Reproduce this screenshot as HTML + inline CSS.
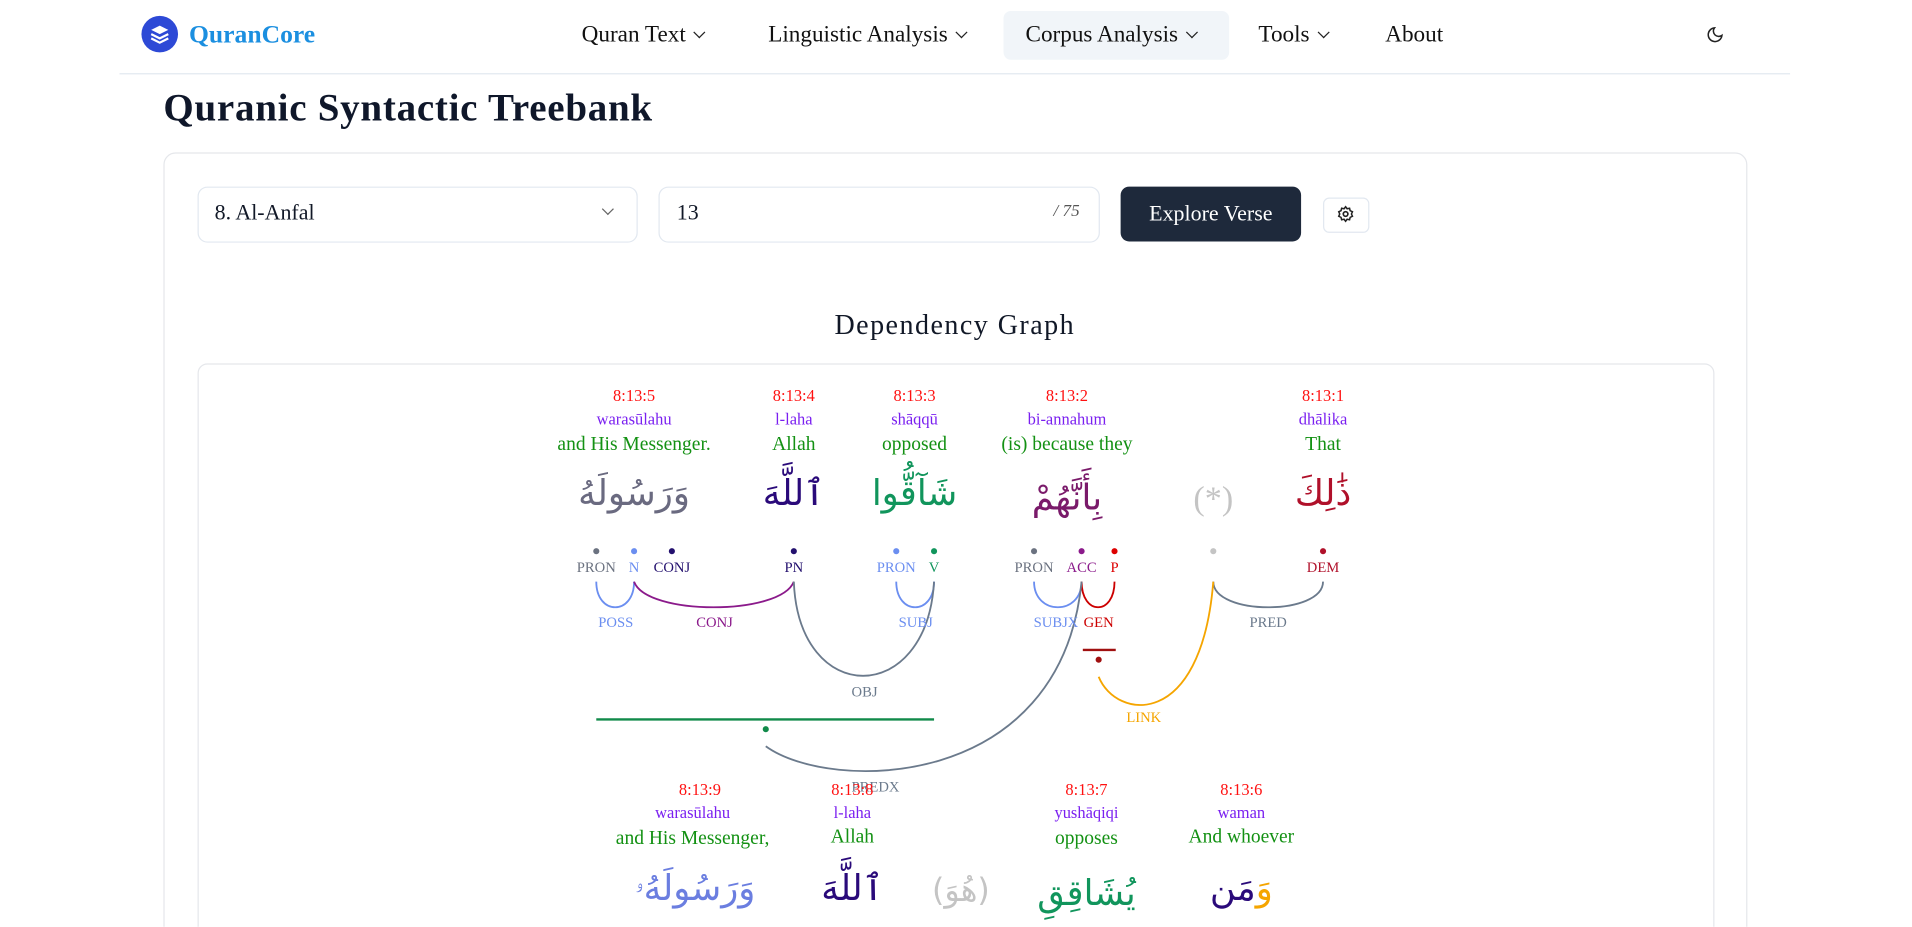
<!DOCTYPE html>
<html><head><meta charset="utf-8"><style>
html,body{margin:0;padding:0;background:#fff;overflow:hidden}
body{width:1912px;height:927px;position:relative}
#w{position:absolute;left:0;top:0;width:1568px;height:760px;transform:scale(1.219388);transform-origin:0 0;font-family:"Liberation Serif",serif;color:#111827;overflow:hidden}
.a{position:absolute;white-space:nowrap}
.c{position:absolute;white-space:nowrap;transform:translateX(-50%);text-align:center}
.nav{font-size:19px;top:18px;color:#111}
.chev{display:inline-block;width:6px;height:6px;border-right:1.5px solid #222;border-bottom:1.5px solid #222;transform:rotate(45deg);margin-left:8px;position:relative;top:-4px}
.ref{color:#f11;font-size:13.5px}
.tr{color:#7a1ff0;font-size:13.5px}
.en{color:#139113;font-size:16px}
.ar{font-family:"DejaVu Sans",sans-serif;font-size:29px;direction:rtl;line-height:1}
</style></head><body><div id="w">
<div class="a" style="left:116px;top:13px;width:30px;height:30px;border-radius:50%;background:#2d49d6"></div>
<svg class="a" style="left:116px;top:13px" width="30" height="30" viewBox="0 0 30 30"><path d="M15 8l7 3.5-7 3.5-7-3.5z" fill="#fff"/><path d="M8 15l7 3.5 7-3.5M8 18.5l7 3.5 7-3.5" fill="none" stroke="#fff" stroke-width="1.8"/></svg>
<div class="a" style="left:155px;top:16px;font-size:21px;font-weight:bold;color:#1b8fe0">QuranCore</div>
<div class="a" style="left:823px;top:9px;width:185px;height:40px;background:#f1f5f9;border-radius:6px"></div>
<div class="a nav" style="left:477px">Quran Text<span class="chev"></span></div>
<div class="a nav" style="left:630px">Linguistic Analysis<span class="chev"></span></div>
<div class="a nav" style="left:841px">Corpus Analysis<span class="chev"></span></div>
<div class="a nav" style="left:1032px">Tools<span class="chev"></span></div>
<div class="a nav" style="left:1136px">About</div>
<svg class="a" style="left:1399px;top:21px" width="15" height="15" viewBox="0 0 24 24"><path d="M21 12.8A9 9 0 1 1 11.2 3a7 7 0 0 0 9.8 9.8z" fill="none" stroke="#222" stroke-width="2"/></svg>
<div class="a" style="left:98px;top:60px;width:1370px;height:1px;background:#e2e8f0"></div>
<div class="a" style="left:134px;top:70px;font-size:32px;font-weight:bold;color:#0f172a;letter-spacing:0.6px">Quranic Syntactic Treebank</div>
<div class="a" style="left:134px;top:125px;width:1297px;height:760px;border:1px solid #e5e7eb;border-radius:10px"></div>
<div class="a" style="left:162px;top:153px;width:359px;height:44px;border:1px solid #e2e8f0;border-radius:8px"></div>
<div class="a" style="left:176px;top:164px;font-size:18px">8. Al-Anfal</div>
<div class="a" style="left:495px;top:168px;width:6px;height:6px;border-right:1.3px solid #666;border-bottom:1.3px solid #666;transform:rotate(45deg)"></div>
<div class="a" style="left:540px;top:153px;width:360px;height:44px;border:1px solid #e2e8f0;border-radius:8px"></div>
<div class="a" style="left:555px;top:164px;font-size:18px">13</div>
<div class="a" style="left:864px;top:166px;font-size:14px;font-style:italic;color:#555">/ 75</div>
<div class="a" style="left:919px;top:153px;width:148px;height:45px;background:#1e293b;border-radius:7px;color:#fff;font-size:18px;line-height:45px;text-align:center">Explore Verse</div>
<div class="a" style="left:1085px;top:162px;width:36px;height:27px;border:1px solid #e2e8f0;border-radius:5px"></div>
<svg class="a" style="left:1096px;top:168px" width="15" height="15" viewBox="0 0 24 24"><circle cx="12" cy="12" r="3" fill="none" stroke="#222" stroke-width="2.2"/><path d="M12 2.5l2 2.6 3.2-.6.8 3.1 3 1.4-1.3 3 1.3 3-3 1.4-.8 3.1-3.2-.6-2 2.6-2-2.6-3.2.6-.8-3.1-3-1.4 1.3-3-1.3-3 3-1.4.8-3.1 3.2.6z" fill="none" stroke="#222" stroke-width="2"/></svg>
<div class="c" style="left:783px;top:254px;font-size:23px;letter-spacing:1.2px">Dependency Graph</div>
<div class="a" style="left:162px;top:298px;width:1242px;height:560px;border:1px solid #e5e7eb;border-radius:8px"></div>

<div class="c ref" style="left:520px;top:317px">8:13:5</div><div class="c tr" style="left:520px;top:336px">warasūlahu</div><div class="c en" style="left:520px;top:356px">and His Messenger.</div>
<div class="c ar" style="left:520px;top:390px;color:#6a6a80">وَرَسُولَهُ</div>
<div class="c ref" style="left:651px;top:317px">8:13:4</div><div class="c tr" style="left:651px;top:336px">l-laha</div><div class="c en" style="left:651px;top:356px">Allah</div>
<div class="c ar" style="left:651px;top:390px;color:#2a0a7a">ٱللَّهَ</div>
<div class="c ref" style="left:750px;top:317px">8:13:3</div><div class="c tr" style="left:750px;top:336px">shāqqū</div><div class="c en" style="left:750px;top:356px">opposed</div>
<div class="c ar" style="left:750px;top:390px;color:#11955c">شَآقُّوا</div>
<div class="c ref" style="left:875px;top:317px">8:13:2</div><div class="c tr" style="left:875px;top:336px">bi-annahum</div><div class="c en" style="left:875px;top:356px">(is) because they</div>
<div class="c ar" style="left:875px;top:394px;color:#7a1a6a">بِأَنَّهُمْ</div>
<div class="c" style="left:995px;top:394px;font-size:28px;color:#c4c4c4">(*)</div>
<div class="c ref" style="left:1085px;top:317px">8:13:1</div><div class="c tr" style="left:1085px;top:336px">dhālika</div><div class="c en" style="left:1085px;top:356px">That</div>
<div class="c ar" style="left:1085px;top:390px;color:#b0102a">ذَٰلِكَ</div>

<svg class="a" style="left:0;top:0" width="1568" height="760" viewBox="0 0 1568 760" font-family="Liberation Serif,serif" font-size="12" text-anchor="middle">
<g>
<circle cx="489" cy="452" r="2.5" fill="#6b7280"/><text x="489" y="469" fill="#6b7280">PRON</text>
<circle cx="520" cy="452" r="2.5" fill="#6b8ef0"/><text x="520" y="469" fill="#6b8ef0">N</text>
<circle cx="551" cy="452" r="2.5" fill="#23106e"/><text x="551" y="469" fill="#23106e">CONJ</text>
<circle cx="651" cy="452" r="2.5" fill="#23106e"/><text x="651" y="469" fill="#23106e">PN</text>
<circle cx="735" cy="452" r="2.5" fill="#6b8ef0"/><text x="735" y="469" fill="#6b8ef0">PRON</text>
<circle cx="766" cy="452" r="2.5" fill="#11955c"/><text x="766" y="469" fill="#11955c">V</text>
<circle cx="848" cy="452" r="2.5" fill="#6b7280"/><text x="848" y="469" fill="#6b7280">PRON</text>
<circle cx="887" cy="452" r="2.5" fill="#8b1a8b"/><text x="887" y="469" fill="#8b1a8b">ACC</text>
<circle cx="914" cy="452" r="2.5" fill="#d00"/><text x="914" y="469" fill="#d00">P</text>
<circle cx="995" cy="452" r="2.5" fill="#c4c4c4"/>
<circle cx="1085" cy="452" r="2.5" fill="#b0102a"/><text x="1085" y="469" fill="#b0102a">DEM</text>
</g>
<g fill="none" stroke-width="1.5">
<path d="M489 477 C489 505 520 505 520 477" stroke="#6b8ef0"/>
<path d="M520 477 C530 505 640 505 651 477" stroke="#8b1a8b"/>
<path d="M735 477 C735 505 766 505 766 477" stroke="#6b8ef0"/>
<path d="M651 477 C655 580 760 580 766 477" stroke="#6b7a8c"/>
<path d="M848 477 C848 505 887 505 887 477" stroke="#6b8ef0"/>
<path d="M887 477 C887 505 914 505 914 477" stroke="#c00"/>
<path d="M995 477 C995 505 1085 505 1085 477" stroke="#6b7a8c"/>
<path d="M901 555 C915 590 985 600 995 477" stroke="#f5a500"/>
<path d="M628 612 C680 650 870 650 887 477" stroke="#6b7a8c"/>
<line x1="489" y1="590" x2="766" y2="590" stroke="#118a4a" stroke-width="2"/>
<line x1="888" y1="533" x2="915" y2="533" stroke="#a01010" stroke-width="2"/>
</g>
<circle cx="628" cy="598" r="2.5" fill="#118a4a"/><circle cx="901" cy="541" r="2.5" fill="#a01010"/>
<text x="505" y="514" fill="#6b8ef0">POSS</text>
<text x="586" y="514" fill="#8b1a8b">CONJ</text>
<text x="751" y="514" fill="#6b8ef0">SUBJ</text>
<text x="709" y="571" fill="#6b7a8c">OBJ</text>
<text x="866" y="514" fill="#6b8ef0">SUBJX</text>
<text x="901" y="514" fill="#c00">GEN</text>
<text x="1040" y="514" fill="#6b7a8c">PRED</text>
<text x="938" y="592" fill="#f5a500">LINK</text>
<text x="718" y="649" fill="#6b7a8c">PREDX</text>
</svg>

<div class="c ref" style="left:574px;top:640px">8:13:9</div><div class="c tr" style="left:568px;top:659px">warasūlahu</div><div class="c en" style="left:568px;top:679px">and His Messenger,</div>
<div class="c ar" style="left:570px;top:714px;color:#6b7ee0">وَرَسُولَهُۥ</div>
<div class="c ref" style="left:699px;top:640px">8:13:8</div><div class="c tr" style="left:699px;top:659px">l-laha</div><div class="c en" style="left:699px;top:678px">Allah</div>
<div class="c ar" style="left:699px;top:714px;color:#2a0a7a">ٱللَّهَ</div>
<div class="c ar" style="left:788px;top:718px;color:#c4c4c4;font-size:26px">(هُوَ)</div>
<div class="c ref" style="left:891px;top:640px">8:13:7</div><div class="c tr" style="left:891px;top:659px">yushāqiqi</div><div class="c en" style="left:891px;top:679px">opposes</div>
<div class="c ar" style="left:891px;top:718px;color:#11955c">يُشَاقِقِ</div>
<div class="c ref" style="left:1018px;top:640px">8:13:6</div><div class="c tr" style="left:1018px;top:659px">waman</div><div class="c en" style="left:1018px;top:678px">And whoever</div>
<div class="c ar" style="left:1018px;top:714px"><span style="color:#f5a500">وَ</span><span style="color:#2a0a7a">مَن</span></div>
</div></body></html>
